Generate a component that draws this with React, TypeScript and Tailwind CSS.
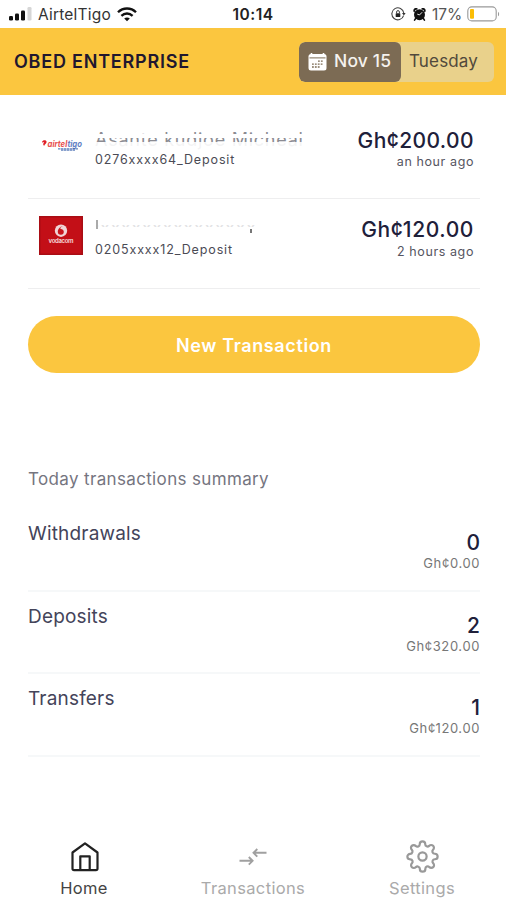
import React from "react";
import { FiSettings } from "react-icons/fi";

function Signal() {
  return (
    <svg width="23" height="14" viewBox="0 0 23 14" className="block">
      <rect x="0" y="9" width="4" height="4.5" rx="1.3" fill="#111" />
      <rect x="6" y="6.5" width="4" height="7" rx="1.3" fill="#111" />
      <rect x="12" y="3.5" width="4" height="10" rx="1.3" fill="#111" />
      <rect x="18.5" y="0" width="4" height="13.5" rx="1.3" fill="#d6d6d6" />
    </svg>
  );
}

function Wifi() {
  return (
    <svg width="20" height="15" viewBox="0 0 20 15" className="block" fill="none" stroke="#111" strokeWidth="2.3">
      <path d="M1 5.3C6 .2 14 .2 19 5.3" />
      <path d="M4.4 8.8c3.2-3.1 8-3.1 11.2 0" />
      <path d="M10 14.2 7.2 11.6c1.6-1.5 4-1.5 5.6 0Z" fill="#111" stroke="none" />
    </svg>
  );
}

function OrientationLock() {
  return (
    <svg width="15" height="14" viewBox="0 0 15 14" className="block" fill="none" stroke="#444" strokeWidth="1.1">
      <path d="M12.6 8.6A6 6 0 1 1 12.8 6" />
      <path d="M11 6h3.6l-1.7 2.6Z" fill="#333" stroke="none" />
      <rect x="4.7" y="6.2" width="4.6" height="3.8" rx=".6" fill="#222" stroke="none" />
      <path d="M5.6 6.4V5a1.4 1.4 0 0 1 2.8 0v1.4" strokeWidth="1" />
    </svg>
  );
}

function Alarm() {
  return (
    <svg width="13" height="13" viewBox="0 0 14 14" className="block">
      <path d="M1.3 3.2C1.3 1.5 2.200.8 3.900.9M12.700 3.200c0-1.700-.9-2.400-2.600-2.300" stroke="#111" strokeWidth="2" fill="none" strokeLinecap="round" />
      <circle cx="7" cy="7.200" r="5.900" fill="#111" />
      <path d="m3 11-1.300 2M11 11l1.300 2" stroke="#111" strokeWidth="1.700" strokeLinecap="round" />
      <path d="M9.800 4.600 7 7.500 4.600 6.600" stroke="#fff" strokeWidth="1" fill="none" />
    </svg>
  );
}

function Battery() {
  return (
    <svg width="33" height="16" viewBox="0 0 33 16" className="block">
      <rect x=".8" y=".9" width="28.400" height="14" rx="4" fill="#fff" stroke="#999" strokeWidth="1.100" />
      <rect x="3" y="3" width="4" height="9.800" rx="1" fill="#fbbd05" />
      <path d="M31 5.700c1.500.700 1.500 3.900 0 4.600Z" fill="#999" />
    </svg>
  );
}

function Calendar() {
  return (
    <svg width="19" height="19" viewBox="0 0 19 19" className="block">
      <path d="M3.500 1v3M15.500 1v3" stroke="#fff" strokeWidth="1.600" />
      <rect x=".5" y="2" width="18" height="16.500" rx="2.500" fill="#fff" />
      <path d="M1.500 5.900h16" stroke="#7c6b54" strokeWidth="1" />
      <path d="M10 9.200h5.500M4 12.100h11.500M4 15h8.500" stroke="#7c6b54" strokeWidth="1.300" strokeDasharray="1.800 1.100" />
    </svg>
  );
}

function AirtelTigoLogo() {
  return (
    <svg width="42" height="13" viewBox="0 0 42 13" className="block">
      <path d="M1 3.200C1.500.800 5.600.700 5.600 3c0 1.700-2.200 2.300-2.300 3.800C1.800 6.300 1.900 4.500 3.200 3.500 2.400 2.900 1.600 3.800 1 3.200Z" fill="#e01f26" />
      <text x="6.500" y="7.800" fontFamily="Inter, sans-serif" fontSize="9" fontWeight="700" fontStyle="italic" textLength="34.500" lengthAdjust="spacingAndGlyphs">
        <tspan fill="#e8504f">airtel</tspan>
        <tspan fill="#5f80c4">tigo</tspan>
      </text>
      <path d="M17 9.900h20M20 11.100h14" stroke="#3c64ad" strokeWidth="1" strokeDasharray="2.500 .5" />
    </svg>
  );
}

function VodacomLogo() {
  return (
    <svg width="44" height="39" viewBox="0 0 44 39" className="block">
      <rect width="44" height="39" fill="#c30f17" />
      <rect x=".75" y=".75" width="42.500" height="37.500" fill="none" stroke="#a90d14" strokeWidth="1.500" />
      <circle cx="22" cy="14.700" r="6.200" fill="#f0d5d7" />
      <path d="M24 10.200c-2 .4-2.700 1.400-2.700 2.500 2.300.3 3.500 1.500 3.500 3.100a3 3 0 0 1-6 0c0-2.700 2-5.300 5.200-5.600Z" fill="#c9161e" />
      <text x="22" y="26.500" textAnchor="middle" fontFamily="Inter, sans-serif" fontSize="6" fontWeight="700" fill="#f3cccd" textLength="25">vodacom</text>
    </svg>
  );
}

function HomeIcon() {
  return (
    <svg width="28" height="31" viewBox="0 0 28 31" className="block" fill="none" stroke="#222" strokeWidth="2.200" strokeLinejoin="round">
      <path d="M1.500 11.500 14 2.300l12.500 9.200v16a1.600 1.600 0 0 1-1.600 1.600H3.100a1.600 1.600 0 0 1-1.600-1.600Z" />
      <path d="M9.300 29V15.300h9.400V29" />
    </svg>
  );
}

function TransferIcon() {
  return (
    <svg width="28" height="18" viewBox="0 0 28 18" className="block" fill="none" stroke="#a0a0a0" strokeWidth="1.900">
      <path d="M27.500 4.800H15M18.300 1l-3.800 3.800 3.800 3.800M.5 12.800H13M9.800 9l3.800 3.800-3.800 3.800" />
    </svg>
  );
}

/* Name with horizontal bands redacted, so only slivers of the letters stay visible. */
function RedactedName({ name, faint }: { name: string; faint?: boolean }) {
  return (
    <div className="relative h-[22px] w-[212px] overflow-hidden">
      <div className={faint ? "text-[18px] leading-[22px] tracking-[.6px] whitespace-nowrap text-[#e2e2e4]" : "pt-px text-[18px] leading-[22px] tracking-[.75px] whitespace-nowrap text-[#8b8b92]"}>
        {name}
      </div>
      <div className={faint ? "absolute inset-x-0 top-0 h-[8px] bg-white" : "absolute inset-x-0 top-[6px] h-[4px] bg-white"} />
      <div className={faint ? "absolute inset-x-0 top-[10px] h-[12px] bg-white" : "absolute inset-x-0 top-[14px] h-[8px] bg-white/90"} />
    </div>
  );
}

const summary = [
  { label: "Withdrawals", count: "0", amount: "Gh¢0.00" },
  { label: "Deposits", count: "2", amount: "Gh¢320.00" },
  { label: "Transfers", count: "1", amount: "Gh¢120.00" },
];

export default function App() {
  return (
    <div className="flex h-[900px] w-[506px] flex-col overflow-hidden bg-white font-['Inter',sans-serif] text-[#20203a]">
      <div className="flex h-7 shrink-0 items-center justify-between pr-[6px] pl-[9px] text-[#333]">
        <div className="flex w-[189px] items-center">
          <Signal />
          <span className="ml-[6px] w-[75px] pt-[2px] text-[15.500px] leading-[26px] tracking-[.2px]">AirtelTigo</span>
          <span className="ml-[4px]"><Wifi /></span>
        </div>
        <span className="pt-[2px] text-[15.500px] leading-[26px] font-semibold tracking-[.5px] text-[#222]">10:14</span>
        <div className="flex w-[192px] items-center justify-end">
          <OrientationLock />
          <span className="ml-[7px]"><Alarm /></span>
          <span className="ml-[6px] w-[31px] pt-[2px] text-[15.500px] leading-[26px] whitespace-nowrap text-[#555]">17%</span>
          <span className="ml-[4px]"><Battery /></span>
        </div>
      </div>

      <header className="flex h-[67px] shrink-0 items-center justify-between bg-[#fbc63f] pr-3 pl-[14px]">
        <h1 className="text-[18px] font-semibold tracking-[.78px] text-[#20172f]">OBED ENTERPRISE</h1>
        <div className="flex h-10 w-[195px] overflow-hidden rounded-md bg-[#e9d18b]">
          <div className="flex w-[102px] items-center rounded-md bg-[#7c6b54] pl-[9px] text-white">
            <Calendar />
            <span className="ml-[7px] text-[17.500px] font-medium tracking-[.15px] whitespace-nowrap text-[#f5f2ee]">Nov 15</span>
          </div>
          <span className="pl-[8px] text-[17px] leading-[38px] tracking-[.15px] text-[#51493c]">Tuesday</span>
        </div>
      </header>

      <main className="flex flex-col pr-[26px] pl-[28px]">
        <section className="flex h-[104px] border-b border-[#eeeeef] pt-[33px] pr-[6px]">
          <div className="w-[67px] pt-[11px] pl-[13px]"><AirtelTigoLogo /></div>
          <div className="flex-1">
            <RedactedName name="Asante kudjoe Micheal" />
            <div className="text-[12.500px] leading-5 tracking-[.87px] text-[#4b4b55]">0276xxxx64_Deposit</div>
          </div>
          <div className="pt-px text-right">
            <div className="text-[21px] leading-6 font-medium tracking-[.4px]">Gh¢200.00</div>
            <div className="-mt-px text-[12.500px] leading-5 tracking-[.6px] text-[#55555f]">an hour ago</div>
          </div>
        </section>
        <section className="flex h-[90px] border-b border-[#eeeeef] pt-[18px] pr-[6px]">
          <div className="-mt-px w-[67px] pl-[11px]"><VodacomLogo /></div>
          <div className="flex-1">
            <div className="relative">
              <RedactedName name="lxxxxxxxxxxxxxxx" faint />
              <span className="absolute top-[3px] left-[1px] h-[9px] w-[2px] bg-[#aaa]" />
              <span className="absolute top-[12px] left-[155px] h-[4px] w-[1.500px] bg-[#777]" />
            </div>
            <div className="pt-px text-[12.500px] leading-5 tracking-[.87px] text-[#4b4b55]">0205xxxx12_Deposit</div>
          </div>
          <div className="pt-px text-right">
            <div className="text-[21px] leading-6 font-medium tracking-[.6px]">Gh¢120.00</div>
            <div className="text-[12.500px] leading-5 tracking-[.6px] text-[#55555f]">2 hours ago</div>
          </div>
        </section>

        <button className="mt-[27px] h-[57px] rounded-full bg-[#fbc63f] pt-px text-[18px] font-semibold tracking-[.62px] text-white">
          New Transaction
        </button>

        <h2 className="mt-[94px] text-[17px] leading-6 tracking-[.35px] text-[#75757f]">Today transactions summary</h2>
        <div className="mt-[18px]">
          {summary.map((row) => (
            <div key={row.label} className="flex h-[82.500px] justify-between border-b-2 border-[#f6f8f9]">
              <div className="pt-[13px] text-[19px] leading-6 tracking-[.18px] text-[#44445a]">{row.label}</div>
              <div className="pt-[22px] text-right">
                <div className="text-[21px] leading-6 font-medium">{row.count}</div>
                <div className="-mt-px text-[13px] leading-[18px] tracking-[.6px] text-[#777]">{row.amount}</div>
              </div>
            </div>
          ))}
        </div>
      </main>

      <nav className="mt-auto flex h-[62px] shrink-0 text-[16.500px] tracking-[.35px] text-[#aaa]">
        <div className="flex w-[168px] flex-col items-center text-[#444]">
          <div className="flex h-[39px] items-center pl-px"><HomeIcon /></div>
          <span className="pt-px leading-6">Home</span>
        </div>
        <div className="flex w-[170px] flex-col items-center">
          <div className="flex h-[39px] items-center"><TransferIcon /></div>
          <span className="pt-px leading-6">Transactions</span>
        </div>
        <div className="flex w-[168px] flex-col items-center">
          <div className="flex h-[38px] items-center"><FiSettings size={33} strokeWidth={1.6} color="#999" /></div>
          <span className="pt-[2px] leading-6">Settings</span>
        </div>
      </nav>
    </div>
  );
}
